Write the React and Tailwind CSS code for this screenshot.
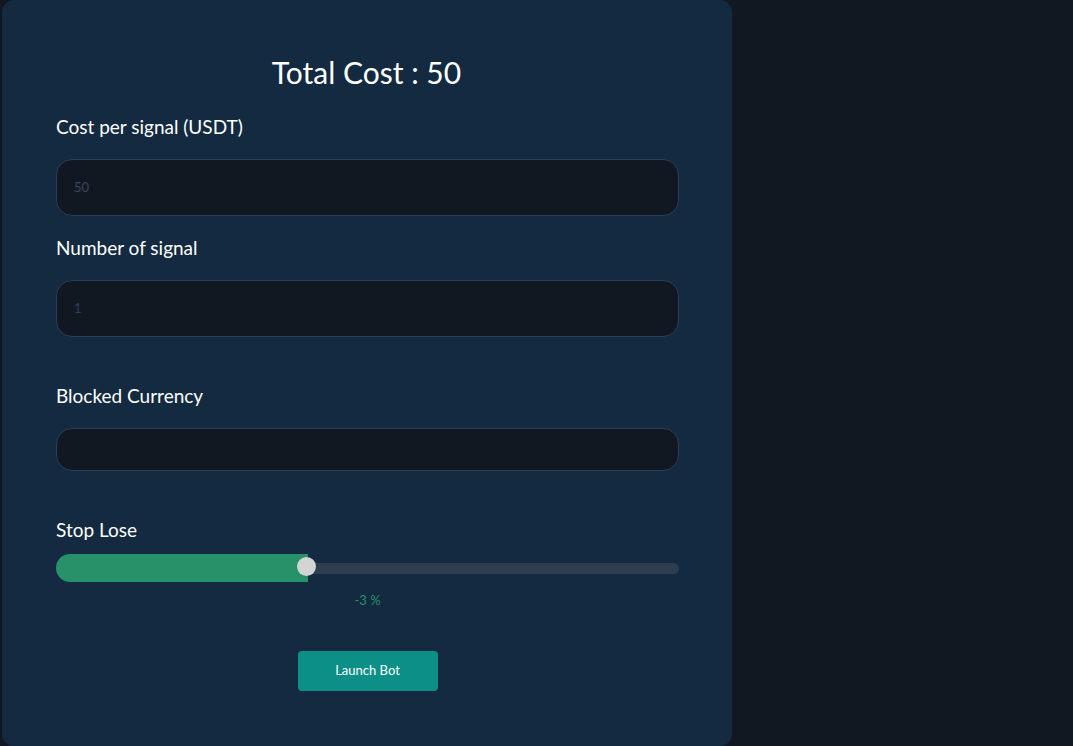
export default function App() {
  return (
    <div className="w-[1073px] h-[746px] bg-[#111822] flex overflow-hidden" style={{ fontFamily: "Lato, 'Noto Sans', sans-serif" }}>
      <div className="ml-[2px] w-[730px] h-[746px] bg-[#132a40] rounded-[12px] pl-[54px] pr-[53px] pt-[52px] flex flex-col">
        <h1 className="text-center text-white text-[30px] leading-[40px] pr-[2px]">Total Cost : 50</h1>
        <label className="mt-[23px] text-white text-[19px] leading-[24px]">Cost per signal (USDT)</label>
        <div className="mt-[20px] h-[57px] rounded-[16px] bg-[#111822] border border-[#2b3e53] flex items-center px-[17px] text-[13px] text-[#3b4858]">50</div>
        <label className="mt-[20px] text-white text-[19px] leading-[24px]">Number of signal</label>
        <div className="mt-[20px] h-[57px] rounded-[16px] bg-[#111822] border border-[#2b3e53] flex items-center px-[17px] text-[13px] text-[#27405c]">1</div>
        <label className="mt-[47px] text-white text-[19px] leading-[24px]">Blocked Currency</label>
        <div className="mt-[20px] h-[43px] rounded-[16px] bg-[#111822] border border-[#2b3e53]"></div>
        <label className="mt-[47px] text-white text-[19px] leading-[24px]">Stop Lose</label>
        <div className="mt-[12px] relative h-[28px] flex items-center">
          <div className="absolute left-0 top-[9px] h-[11px] w-full rounded-full bg-[#2f3e4f]"></div>
          <div className="absolute left-0 top-0 h-[28px] w-[252px] rounded-l-[14px] bg-[#27916a]"></div>
          <div className="absolute left-[241px] top-[3px] w-[19px] h-[19px] rounded-full bg-[#d4d4d4]"></div>
        </div>
        <div className="mt-[10px] text-center text-[13px] leading-[16px] text-[#27916a]">-3 %</div>
        <div className="mt-[43px] flex justify-center">
          <button className="w-[140px] h-[40px] rounded-[4px] bg-[#0b8f87] text-white text-[13px]">Launch Bot</button>
        </div>
      </div>
    </div>
  );
}
